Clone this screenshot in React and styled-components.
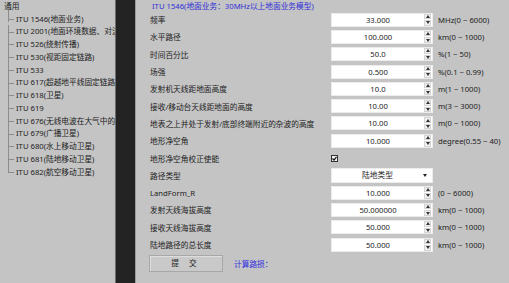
import React from 'react';
import styled, { createGlobalStyle } from 'styled-components';

const GlobalStyle = createGlobalStyle`
  html, body {
    margin: 0;
    padding: 0;
    background: #c4c4c4;
  }
  body {
    font-family: 'Noto Sans', 'Noto Sans CJK SC', sans-serif;
    color: #1c1c1c;
  }
`;

const Page = styled.div`
  display: flex;
  width: 509px;
  height: 283px;
  overflow: hidden;
  background: #c4c4c4;
`;

const TreePanel = styled.div`
  width: 115px;
  flex: none;
  overflow: hidden;
  white-space: nowrap;
  font-size: 7.7px;
`;

const RootLabel = styled.div`
  height: 12.6px;
  line-height: 12.6px;
  padding-left: 4px;
`;

const TreeList = styled.ul`
  list-style: none;
  margin: 0;
  padding: 0 0 0 8px;
`;

const TreeItem = styled.li`
  position: relative;
  height: 12.75px;
  line-height: 12.75px;
  padding-left: 8px;

  &::before {
    content: '';
    position: absolute;
    left: 0;
    top: 6.4px;
    width: 6px;
    border-top: 1px solid #8c8c8c;
  }
  &::after {
    content: '';
    position: absolute;
    left: 0;
    top: ${p => (p.$first ? '-3px' : '0')};
    height: ${p => (p.$last ? '6.9px' : '100%')};
    border-left: 1px solid #8c8c8c;
  }
`;

const Splitter = styled.div`
  width: 19px;
  flex: none;
  background: #232323;
  border-left: 1px solid #6c6c6c;
  border-right: 1px solid #9a9a9a;
`;

const Main = styled.div`
  flex: 1;
  padding-left: 14px;
  font-size: 7.7px;
  white-space: nowrap;
`;

const Title = styled.div`
  height: 11px;
  line-height: 11px;
  padding-left: 2px;
  padding-top: 1px;
  box-sizing: border-box;
  color: #2f2fd8;
`;

const Form = styled.div`
  display: grid;
  grid-template-columns: 176px 102px auto;
  grid-auto-rows: 17.3px;
  column-gap: 5px;
  align-items: center;
`;

const Label = styled.div``;

const Unit = styled.div``;

const Field = styled.div`
  display: flex;
  align-items: center;
  height: 14px;
  background: #fff;
  box-sizing: border-box;
  border: 1px solid #ececec;
`;

const Value = styled.div`
  flex: 1;
  text-align: center;
  line-height: 12px;
`;

const Spin = styled.div`
  width: 7px;
  height: 12px;
  margin-right: 1px;
  display: flex;
  flex-direction: column;
  gap: 1px;
`;

const SpinHalf = styled.div`
  flex: 1;
  background: #f0f0f0;
  border: 1px solid #d4d4d4;
  display: flex;
  align-items: center;
  justify-content: center;
`;

const Select = styled(Field)`
  height: 15px;
`;

const Check = styled.div`
  width: 7px;
  height: 7px;
  box-sizing: border-box;
  border: 1px solid #333;
  background: #f4f4f4;
  display: flex;
  align-items: center;
  justify-content: center;
`;

const Actions = styled.div`
  display: flex;
  align-items: center;
  margin-top: 2px;
`;

const Button = styled.div`
  width: 74px;
  height: 17px;
  box-sizing: border-box;
  border: 1px solid #a8a8a8;
  box-shadow: inset 1px 1px 0 #dedede;
  background: #c9c9c9;
  text-align: center;
  line-height: 15px;
  letter-spacing: 4px;
  margin-left: -1px;
`;

const Result = styled.div`
  margin-left: 11px;
  color: #3030e0;
`;

const Tri = ({ up }) => (
  <svg width="4" height="3" viewBox="0 0 4 3">
    <polygon points={up ? '2,0 4,3 0,3' : '0,0 4,0 2,3'} fill="#333" />
  </svg>
);

const SpinBox = ({ value }) => (
  <Field>
    <Value>{value}</Value>
    <Spin>
      <SpinHalf><Tri up /></SpinHalf>
      <SpinHalf><Tri /></SpinHalf>
    </Spin>
  </Field>
);

const treeItems = [
  'ITU 1546(地面业务)',
  'ITU 2001(地面环境数据、对流层散射传播)',
  'ITU 526(绕射传播)',
  'ITU 530(视距固定链路)',
  'ITU 533',
  'ITU 617(超越地平线固定链路)',
  'ITU 618(卫星)',
  'ITU 619',
  'ITU 676(无线电波在大气中的衰减)',
  'ITU 679(广播卫星)',
  'ITU 680(水上移动卫星)',
  'ITU 681(陆地移动卫星)',
  'ITU 682(航空移动卫星)',
];

const rows = [
  { label: '频率', value: '33.000', unit: 'MHz(0 ~ 6000)' },
  { label: '水平路径', value: '100.000', unit: 'km(0 ~ 1000)' },
  { label: '时间百分比', value: '50.0', unit: '%(1 ~ 50)' },
  { label: '场强', value: '0.500', unit: '%(0.1 ~ 0.99)' },
  { label: '发射机天线距地面高度', value: '10.0', unit: 'm(1 ~ 1000)' },
  { label: '接收/移动台天线距地面的高度', value: '10.00', unit: 'm(3 ~ 3000)' },
  { label: '地表之上并处于发射/底部终端附近的杂波的高度', value: '10.00', unit: 'm(0 ~ 1000)' },
  { label: '地形净空角', value: '10.000', unit: 'degree(0.55 ~ 40)' },
  { label: '地形净空角校正使能', type: 'check' },
  { label: '路径类型', type: 'select', value: '陆地类型' },
  { label: 'LandForm_R', value: '10.000', unit: '(0 ~ 6000)' },
  { label: '发射天线海拔高度', value: '50.000000', unit: 'km(0 ~ 1000)' },
  { label: '接收天线海拔高度', value: '50.000', unit: 'km(0 ~ 1000)' },
  { label: '陆地路径的总长度', value: '50.000', unit: 'km(0 ~ 1000)' },
];

const renderControl = row => {
  if (row.type === 'check') {
    return (
      <Check>
        <svg width="5" height="5" viewBox="0 0 5 5">
          <polyline points="0.5,2.5 2,4 4.5,0.8" fill="none" stroke="#111" strokeWidth="1.2" />
        </svg>
      </Check>
    );
  }
  if (row.type === 'select') {
    return (
      <Select>
        <Value>{row.value}</Value>
        <svg width="4" height="3" viewBox="0 0 4 3" style={{ marginRight: 5 }}>
          <polygon points="0,0 4,0 2,3" fill="#222" />
        </svg>
      </Select>
    );
  }
  return <SpinBox value={row.value} />;
};

export default function App() {
  return (
    <Page>
      <GlobalStyle />
      <TreePanel>
        <RootLabel>通用</RootLabel>
        <TreeList>
          {treeItems.map((t, i) => (
            <TreeItem key={t} $first={i === 0} $last={i === treeItems.length - 1}>
              {t}
            </TreeItem>
          ))}
        </TreeList>
      </TreePanel>
      <Splitter />
      <Main>
        <Title>ITU 1546(地面业务：30MHz以上地面业务模型)</Title>
        <Form>
          {rows.map(row => (
            <React.Fragment key={row.label}>
              <Label>{row.label}</Label>
              <div>{renderControl(row)}</div>
              <Unit>{row.unit || ''}</Unit>
            </React.Fragment>
          ))}
        </Form>
        <Actions>
          <Button>提 交</Button>
          <Result>计算路损：</Result>
        </Actions>
      </Main>
    </Page>
  );
}
